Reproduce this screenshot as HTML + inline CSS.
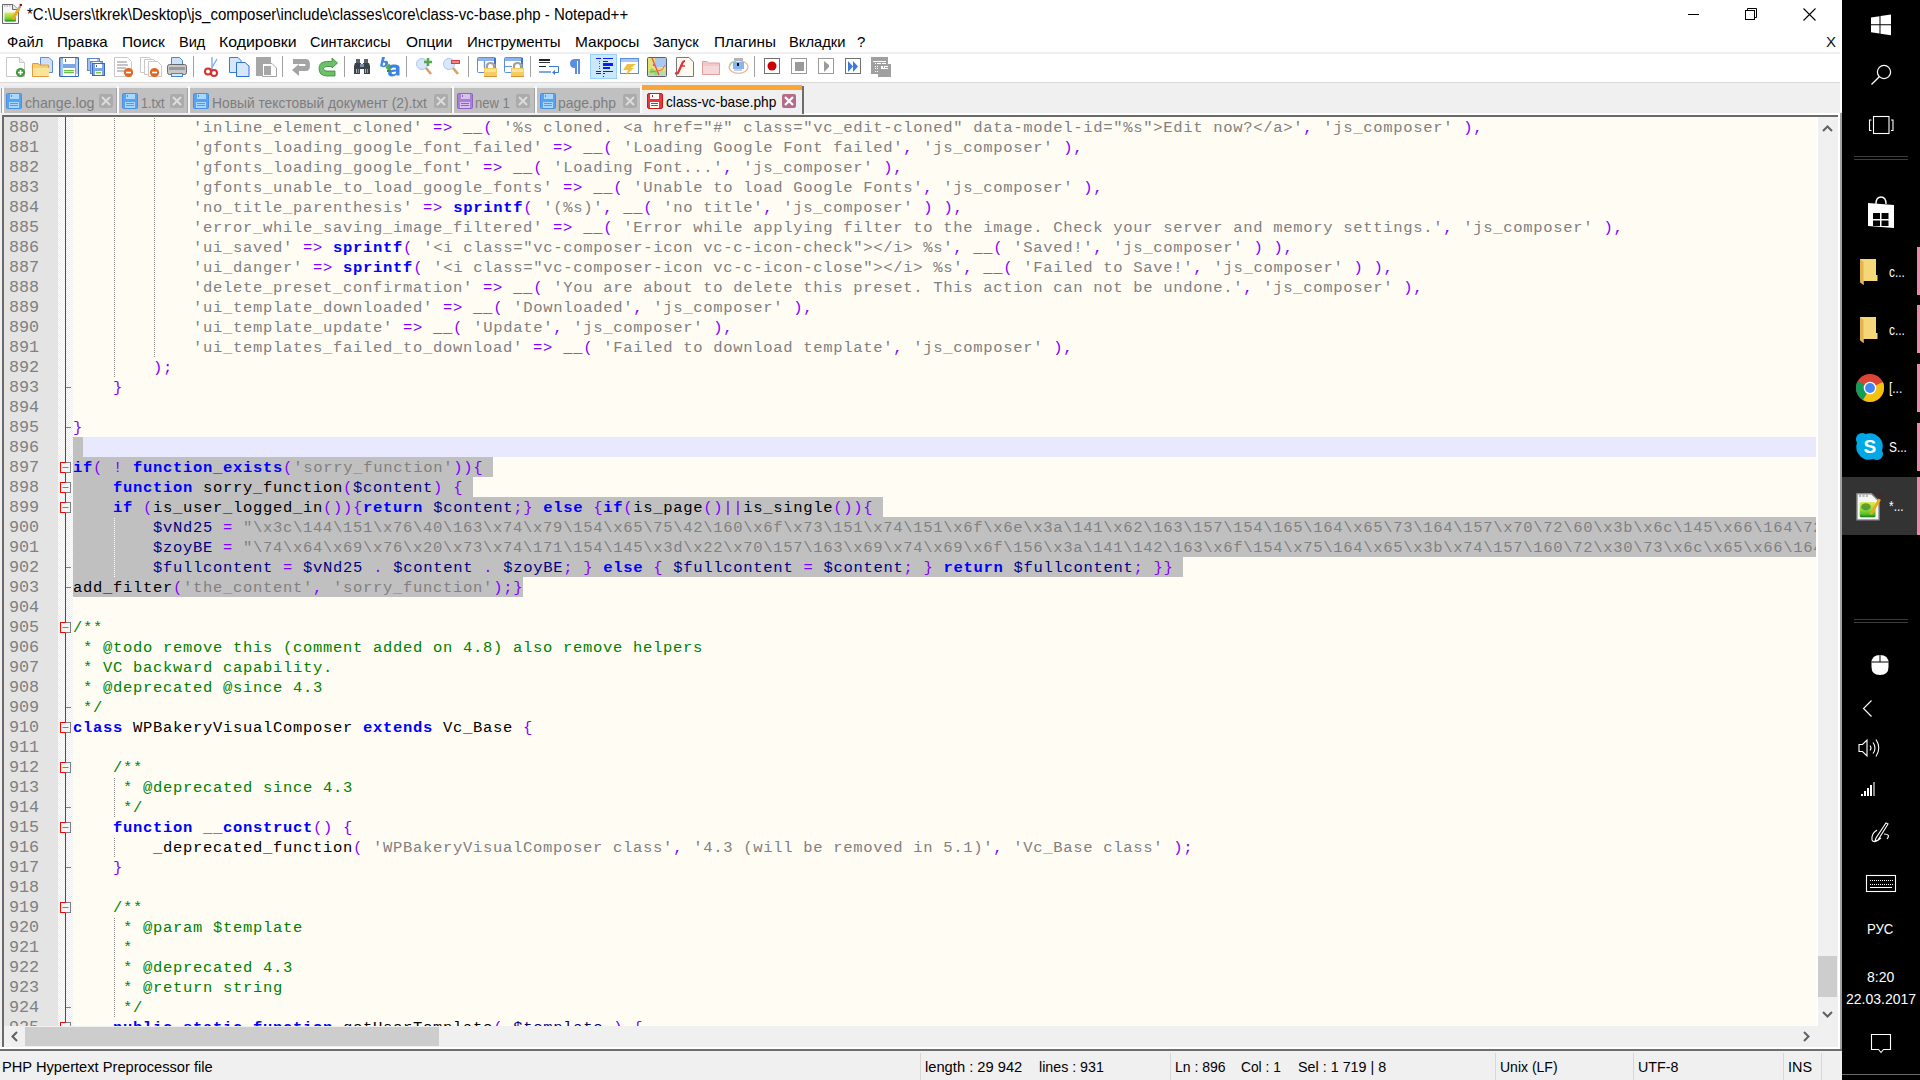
<!DOCTYPE html>
<html><head><meta charset="utf-8">
<style>
*{margin:0;padding:0;box-sizing:border-box}
html,body{width:1920px;height:1080px;overflow:hidden;background:#fff;font-family:"Liberation Sans",sans-serif;position:relative}
.a{position:absolute}
svg{position:absolute;overflow:visible}
.ui{font-family:"Liberation Sans",sans-serif;font-size:15px;color:#000;white-space:pre;line-height:18px}
#title{left:27px;top:6px;font-size:15.6px;transform:scaleX(0.962);transform-origin:0 0}
.menu{top:33px}
#tbsep1{left:0;top:52px;width:1842px;height:2px;background:#f0f0f0}
#tbsep2{left:0;top:82px;width:1842px;height:1px;background:#dadada}
#tabbar{left:0;top:83px;width:1842px;height:32px;background:#f0f0f0}
#edframe{left:0;top:113px;width:1842px;height:937px;background:#f0f0f0}
#edtop{left:0;top:113px;width:1840px;height:2px;background:#fff}
#edtop2{left:2px;top:115px;width:1836px;height:2px;background:#6a6a6a}
#edleft{left:2px;top:115px;width:2px;height:932px;background:#6a6a6a}
#editor{left:4px;top:117px;width:1812px;height:909px;overflow:hidden;background:#fffcf4}
#lnm{left:4px;top:117px;width:54px;height:909px;background:#e4e4e4}
#fold{left:58px;top:117px;width:15px;height:909px;background-color:#ececec;
 background-image:linear-gradient(45deg,#fff 25%,transparent 25%,transparent 75%,#fff 75%),linear-gradient(45deg,#fff 25%,transparent 25%,transparent 75%,#fff 75%);
 background-size:2px 2px;background-position:0 0,1px 1px}
#codeclip{left:0;top:117px;width:1816px;height:909px;overflow:hidden}
.ln{position:absolute;left:0;width:39px;text-align:right;font-family:"Liberation Mono",monospace;font-size:16.8px;letter-spacing:-0.08px;line-height:20px;padding-top:1px;color:#808080;height:20px}
.cl{position:absolute;left:73px;font-family:"Liberation Mono",monospace;font-size:15.5px;letter-spacing:0.7px;line-height:20px;height:20px;padding-top:1px;white-space:pre;color:#000}
.cl b{font-weight:bold;color:#0000ff}
.cl i{font-style:normal}
.cl i.s{color:#808080}
.cl i.o{color:#8000ff}
.cl i.v{color:#000080}
.cl i.c{color:#008000}
.sel{position:absolute;height:20px;background:#c0c0c0}
.cur{position:absolute;left:73px;width:1743px;height:20px;background:#e8e8ff}
.redl{position:absolute;left:65px;width:1px;background:#ff0000}
.tick{position:absolute;left:66px;width:5px;height:1px;background:#808080}
.fbox{position:absolute;left:60px;width:11px;height:11px;background:#f4f4f4;border:1px solid #808080}
.fbox:before{content:"";position:absolute;left:-1px;top:-1px;width:6px;height:11px;border:1px solid #f00;border-right:none}
.fbox:after{content:"";position:absolute;left:1px;top:4px;width:7px;height:1px;background:#808080}
.guide{position:absolute;width:1px;height:20px;background-image:linear-gradient(transparent 50%,#8c8c8c 50%);background-size:1px 2px}
.guide.w{background-image:linear-gradient(transparent 50%,#fff 50%)}
#vscroll{left:1816px;top:117px;width:2px;height:909px;background:#fff}
#vscroll2{left:1818px;top:117px;width:20px;height:930px;background:#f0f0f0}
#vthumb{left:1818px;top:956px;width:19px;height:41px;background:#cdcdcd}
#hscroll{left:4px;top:1026px;width:1814px;height:21px;background:#f0f0f0}
#hthumb{left:25px;top:1027px;width:414px;height:19px;background:#cdcdcd}
#frameR{left:1838px;top:113px;width:2px;height:937px;background:#fff}
#frameR2{left:1840px;top:113px;width:2px;height:967px;background:#a0a0a0}
#hbot{left:0;top:1047px;width:1840px;height:2px;background:#fff}
#status{left:0;top:1049px;width:1842px;height:31px;background:#f0f0f0;border-top:2px solid #6e6e6e}
.ssep{position:absolute;top:1053px;width:1px;height:27px;background:#d7d7d7}
.st{top:1058px}
#taskbar{left:1842px;top:0;width:78px;height:1080px;background:#000}
.tbt{position:absolute;font-family:"Liberation Sans",sans-serif;color:#fff;font-size:14px;white-space:pre;line-height:16px}
.tab{position:absolute;top:88px;height:25px;background:#c0c0c0}
.tabt{position:absolute;top:93px;font-family:"Liberation Sans",sans-serif;font-size:14.2px;line-height:18px;color:#7d7d7d;white-space:pre}
.tabsep{position:absolute;top:86px;width:2px;height:27px;background:#fafafa}
.xb{position:absolute;top:94px;width:14px;height:14px;background:#ababab;border-radius:2px}
.pink{position:absolute;left:1917px;width:3px;background:#f287ad}
</style></head><body>
<div class="a ui" id="title">*C:\Users\tkrek\Desktop\js_composer\include\classes\core\class-vc-base.php - Notepad++</div><div class="a ui menu" style="left:7.0px;transform:scaleX(0.983);transform-origin:0 0">Файл</div><div class="a ui menu" style="left:57.0px;transform:scaleX(1.000);transform-origin:0 0">Правка</div><div class="a ui menu" style="left:122.0px;transform:scaleX(1.030);transform-origin:0 0">Поиск</div><div class="a ui menu" style="left:179.0px;transform:scaleX(0.970);transform-origin:0 0">Вид</div><div class="a ui menu" style="left:219.0px;transform:scaleX(1.057);transform-origin:0 0">Кодировки</div><div class="a ui menu" style="left:310.0px;transform:scaleX(0.966);transform-origin:0 0">Синтаксисы</div><div class="a ui menu" style="left:406.0px;transform:scaleX(1.030);transform-origin:0 0">Опции</div><div class="a ui menu" style="left:467.0px;transform:scaleX(1.000);transform-origin:0 0">Инструменты</div><div class="a ui menu" style="left:575.0px;transform:scaleX(1.030);transform-origin:0 0">Макросы</div><div class="a ui menu" style="left:653.0px;transform:scaleX(0.975);transform-origin:0 0">Запуск</div><div class="a ui menu" style="left:713.5px;transform:scaleX(1.020);transform-origin:0 0">Плагины</div><div class="a ui menu" style="left:789.0px;transform:scaleX(0.980);transform-origin:0 0">Вкладки</div><div class="a ui menu" style="left:857.0px;transform:scaleX(1.000);transform-origin:0 0">?</div><div class="a ui menu" style="left:1826px;color:#111">X</div><svg class="a" style="left:0;top:0" width="1" height="1"><path d="M1688 14.5H1699" stroke="#000" stroke-width="1"/><rect x="1745.5" y="10.5" width="9" height="9" fill="none" stroke="#000"/><path d="M1747.5 10.5V8.5H1756.5V17.5H1754.5" fill="none" stroke="#000"/><path d="M1803.5 8.5L1815.5 20.5M1815.5 8.5L1803.5 20.5" stroke="#000" stroke-width="1.1"/><defs><linearGradient id="npg" x1="0" y1="0" x2="0" y2="1"><stop offset="0" stop-color="#e0ea60"/><stop offset="0.55" stop-color="#8ed838"/><stop offset="0.85" stop-color="#48b828"/><stop offset="1" stop-color="#1a6e12"/></linearGradient></defs><path d="M2.5 4.5H13L18.5 10V23.5H2.5Z" fill="#f4f6f8" stroke="#686868"/><path d="M12.5 4.5V9.5H18" fill="#e8e8e8" stroke="#686868"/><path d="M4 6H11" stroke="#b8b8b8" stroke-width="1.6" stroke-dasharray="1.5 1"/><rect x="4.5" y="12.5" width="11.5" height="9" rx="1" fill="url(#npg)"/><path d="M12.5 19.5L19 8.5" stroke="#f0a818" stroke-width="3"/><path d="M19 8.5L20 6.5" stroke="#9098a8" stroke-width="2.4"/><circle cx="20.8" cy="5.1" r="1.3" fill="#8a0a0a"/></svg><div class="a" id="tbsep1"></div><div class="a" id="tbsep2"></div><svg class="a" style="left:0;top:0" width="1" height="1"><path d="M6.5 57.5H19.5L24.5 62.5V76.5H6.5Z" fill="#fff" stroke="#c9c9c9"/><path d="M19.5 57.5V62.5H24.5" fill="#eee" stroke="#c9c9c9"/><circle cx="20.5" cy="72.5" r="4.6" fill="#3f9b3a"/><path d="M18 72.5H23M20.5 70V75" stroke="#fff" stroke-width="1.6"/><path d="M40.5 57.5H49L52.5 61V72.5H40.5Z" fill="#cfe1fa" stroke="#5a8fdc"/><path d="M32.5 63.5H38L40 65H48.5V76.5H32.5Z" fill="#f6cf6a" stroke="#e79a3b"/><path d="M33 68H49V76H33Z" fill="#fae49a"/><rect x="59.5" y="57.5" width="19" height="19" rx="0.5" fill="#7ea6e4" stroke="#3a66c0"/><rect x="61" y="59" width="2" height="17" fill="#a8c8f4"/><rect x="76" y="59" width="2" height="15" fill="#b4cdf0"/><rect x="63" y="58" width="12" height="6" fill="#fff"/><rect x="65" y="59" width="1" height="3" fill="#3a66c0"/><rect x="63" y="68" width="12" height="8" fill="#fff"/><rect x="64" y="70" width="10" height="1.2" fill="#6cc04a"/><rect x="64" y="71.2" width="10" height="0.8" fill="#cfe8c8"/><rect x="64" y="72" width="10" height="1.2" fill="#6cc04a"/><rect x="76" y="74" width="2" height="2" fill="#fff"/><rect x="87.5" y="58.5" width="12" height="12" fill="#a6c2ec" stroke="#5a86d0"/><rect x="90" y="59" width="7" height="2" fill="#fff"/><rect x="90.5" y="61.5" width="12" height="12" fill="#a6c2ec" stroke="#5a86d0"/><rect x="93" y="62" width="7" height="2" fill="#fff"/><rect x="92.5" y="63.5" width="12" height="12" fill="#7ea6e4" stroke="#3a66c0"/><rect x="95" y="64" width="7" height="4" fill="#fff"/><rect x="96" y="65" width="1" height="2" fill="#3a66c0"/><rect x="95" y="71" width="7" height="4" fill="#fff"/><rect x="96" y="72" width="5" height="1.5" fill="#7cd040"/><path d="M114.5 57.5H127.5L131.5 61.5V76.5H114.5Z" fill="#fff" stroke="#c9c9c9"/><path d="M117 62H127M117 65H128M117 68H126M117 71H125" stroke="#8a8a8a" stroke-width="1"/><circle cx="128.5" cy="72.5" r="4.6" fill="#e5661e"/><path d="M126 72.5H131" stroke="#fff" stroke-width="1.6"/><path d="M140.5 57.5H149.5L153.5 61.5V72.5H140.5Z" fill="#fff" stroke="#c9c9c9"/><path d="M144.5 59.5H153.5L157.5 63.5V74.5H144.5Z" fill="#fff" stroke="#c9c9c9"/><path d="M148.5 61.5H157.5L161.5 65.5V76.5H148.5Z" fill="#fff" stroke="#c9c9c9"/><circle cx="154.5" cy="72.5" r="4.6" fill="#e5661e"/><path d="M152 72.5H157" stroke="#fff" stroke-width="1.6"/><path d="M171.5 57.5H179.5L182.5 60.5V67.5H171.5Z" fill="#cfe1fa" stroke="#4a86d8"/><rect x="167.5" y="64.5" width="19" height="10" rx="2" fill="#c8c8c8" stroke="#6a6a6a"/><rect x="169" y="67" width="16" height="3" fill="#9a9a9a"/><rect x="171.5" y="73.5" width="11" height="3" fill="#d6eafc" stroke="#4a86d8"/><rect x="193" y="56" width="1" height="21" fill="#a0a0a0"/><rect x="282" y="56" width="1" height="21" fill="#a0a0a0"/><rect x="344" y="56" width="1" height="21" fill="#a0a0a0"/><rect x="406" y="56" width="1" height="21" fill="#a0a0a0"/><rect x="468" y="56" width="1" height="21" fill="#a0a0a0"/><rect x="530" y="56" width="1" height="21" fill="#a0a0a0"/><rect x="754" y="56" width="1" height="21" fill="#a0a0a0"/><path d="M212 57V71M217 59L210 71" stroke="#7fb0e8" stroke-width="1.4" fill="none"/><circle cx="208" cy="71.5" r="3" fill="none" stroke="#d43030" stroke-width="2"/><circle cx="214" cy="73" r="3" fill="none" stroke="#d43030" stroke-width="2"/><path d="M229.5 57.5H238L241 60.5V72.5H229.5Z" fill="#d6e6fb" stroke="#3d7ad6"/><path d="M236.5 62.5H245L249 66V76.5H236.5Z" fill="#d6e6fb" stroke="#2f6fd6"/><rect x="256" y="57" width="15" height="19" fill="#a6a6a6"/><path d="M262.5 63.5H272L276.5 68V76.5H262.5Z" fill="#fff" stroke="#a6a6a6"/><rect x="264" y="66" width="7" height="9" fill="#a6a6a6"/><path d="M293 59H306Q310 59 310 65Q310 71 306 71H299V76L292 70L299 64V66H305Q305.5 66 305.5 65Q305.5 64 305 64H293Z" fill="#a4a4a4"/><path d="M332 58L337.5 63L332 68V66.5H327Q323.5 66.5 323.5 68.5Q323.5 71 327 71H335V76H327Q319 76 319 68.5Q319 61.5 327 61.5H332Z" fill="#6cc068" stroke="#2e8a2e" stroke-width="0.8"/><rect x="356" y="59" width="4" height="5" fill="#59636e"/><rect x="364" y="59" width="4" height="5" fill="#59636e"/><path d="M355 63H361V64H363V63H369L370 66V74H364V69H360V74H354V66Z" fill="#3a434c"/><rect x="360" y="64" width="4" height="3" fill="#7f8fa0"/><rect x="356" y="69" width="1" height="4" fill="#b0b8c0"/><rect x="358" y="69" width="1" height="4" fill="#8a949e"/><rect x="365" y="69" width="1" height="4" fill="#b0b8c0"/><rect x="367" y="69" width="1" height="4" fill="#8a949e"/><path d="M382 57H385L384 61Q387 60 388 62Q388.5 66 385 67Q383 67.5 381 66.5L380 66.5ZM383.3 62.5L382.6 65.6Q385 66 385.3 63.8Q385 62.2 383.3 62.5Z" fill="#3f86e6"/><path d="M389 63.5L392.5 67.5L389 71.5L385.5 67.5Z" fill="#4fae45"/><rect x="387" y="70" width="4" height="2" fill="#3a8a30"/><path d="M393 64.5Q399 64 399.5 67V75.5H396.5V74.5Q395 76.5 392 76.5Q388 76.2 388 73Q388.5 69.5 396 69.5V68.5Q396 67.5 393.5 67.5L390 68.5L390 65.3Q391.5 64.6 393 64.5ZM396 71.5Q391.5 71.5 391.5 73Q391.8 74.2 393.5 74.2Q396 74 396 72.5Z" fill="#3a82e4"/><circle cx="422" cy="64" r="5.5" fill="#d8e8fa" stroke="#a8c8ee"/><path d="M426 68L431 74" stroke="#d6a26a" stroke-width="2.6"/><path d="M428 58V66M424 62H432" stroke="#57a84d" stroke-width="2.6"/><circle cx="449" cy="64" r="5.5" fill="#d8e8fa" stroke="#a8c8ee"/><path d="M453 68L458 74" stroke="#d6a26a" stroke-width="2.6"/><rect x="451" y="60" width="9" height="4" fill="#e03a3a"/><rect x="452" y="61" width="7" height="2" fill="#f08a8a"/><rect x="477.5" y="57.5" width="18" height="15" rx="1" fill="#fff" stroke="#5a8fdc"/><rect x="478" y="58" width="17" height="3" fill="#8cb4ec"/><rect x="494" y="58" width="2" height="6" fill="#3f72c8"/><path d="M484.5 61V68" stroke="#6a9ae0" stroke-width="1.4"/><path d="M487 68.5V66Q487 63 490.5 63Q494 63 494 66V68.5" fill="none" stroke="#a0a0a0" stroke-width="2.2"/><rect x="484" y="68" width="13" height="9" fill="#f4cc62"/><rect x="485" y="69" width="11" height="3" fill="#fae49a"/><rect x="484" y="76" width="13" height="1" fill="#e09030"/><rect x="504.5" y="57.5" width="18" height="15" rx="1" fill="#fff" stroke="#5a8fdc"/><rect x="505" y="58" width="17" height="3" fill="#8cb4ec"/><rect x="521" y="58" width="2" height="6" fill="#3f72c8"/><path d="M505 66.5H512" stroke="#6a9ae0" stroke-width="1.2"/><path d="M514 68.5V66Q514 63 517.5 63Q521 63 521 66V68.5" fill="none" stroke="#a0a0a0" stroke-width="2.2"/><rect x="511" y="68" width="13" height="9" fill="#f4cc62"/><rect x="512" y="69" width="11" height="3" fill="#fae49a"/><rect x="511" y="76" width="13" height="1" fill="#e09030"/><rect x="539" y="59" width="11" height="2" fill="#222"/><rect x="539" y="62" width="11" height="1" fill="#333"/><rect x="539" y="66" width="7" height="1" fill="#222"/><rect x="539" y="71" width="12" height="2" fill="#7aa9e6"/><path d="M549 66.5H558.5V72.5H553" fill="none" stroke="#3d7ad6"/><path d="M552 72.5L555 70V75Z" fill="#3d7ad6"/><path d="M575 59H580V74H578V61H577V74H575V68Q570 68 570 63.5Q570 59 575 59Z" fill="#5b8ee0"/><rect x="590.5" y="54.5" width="26" height="24" fill="#cce8ff" stroke="#99d1ff"/><rect x="596" y="58" width="5" height="1" fill="#0a1ef0"/><rect x="603" y="58" width="10" height="1" fill="#0a1ef0"/><rect x="603" y="61" width="5" height="1" fill="#0a1ef0"/><rect x="603" y="63" width="10" height="3" fill="#0a1ef0"/><rect x="603" y="67" width="7" height="2" fill="#0a1ef0"/><rect x="599" y="61" width="1" height="1" fill="#e02020"/><rect x="599" y="63" width="1" height="1" fill="#e02020"/><rect x="599" y="66" width="1" height="1" fill="#e02020"/><rect x="599" y="68" width="1" height="1" fill="#e02020"/><rect x="596" y="71" width="5" height="1" fill="#0a1ef0"/><rect x="603" y="71" width="10" height="1" fill="#0a1ef0"/><rect x="596" y="73" width="5" height="1" fill="#0a1ef0"/><rect x="603" y="73" width="2" height="1" fill="#0a1ef0"/><rect x="603" y="76" width="1" height="1" fill="#0a1ef0"/><rect x="620.5" y="58.5" width="18" height="15" fill="#fff" stroke="#5a8fdc"/><rect x="621" y="59" width="17" height="3" fill="#a9c6ee"/><path d="M627 64H636L631 68H634L626 75L628 70H623Z" fill="#f0c040"/><rect x="647.5" y="57.5" width="19" height="19" rx="1" fill="#e2e07a" stroke="#5e5a78"/><rect x="655" y="58" width="11" height="9" fill="#a8c8ee"/><rect x="648" y="71" width="18" height="5" fill="#b8dcb0"/><circle cx="652" cy="71" r="2.5" fill="#90d870"/><circle cx="656" cy="73" r="2.2" fill="#90d870"/><path d="M652 58L659 75" stroke="#e84d5a" stroke-width="1.3"/><path d="M650 72L662 70L665 65" fill="none" stroke="#f07040" stroke-width="1"/><rect x="653" y="64" width="2" height="2" fill="#e8508a"/><path d="M676.5 57.5H689L693.5 62V76.5H676.5Z" fill="#fffaf0" stroke="#7a7a7a"/><path d="M685 61Q683 61 682 64L678 73Q677 74 675 73" fill="none" stroke="#e0303a" stroke-width="2.2"/><path d="M680 66H685" stroke="#e0303a" stroke-width="1.5"/><path d="M702.5 61.5H707L708.5 63H719.5V74.5H702.5Z" fill="#f2c8c8" stroke="#e0a0a0"/><rect x="703" y="66" width="16" height="8" fill="#f6d8d8"/><ellipse cx="738.5" cy="67" rx="9.5" ry="6.3" fill="#fff" stroke="#e8b890" stroke-width="1.3"/><path d="M729.5 67A9 6 0 0 1 736 61" fill="none" stroke="#a8d8a0" stroke-width="1.3"/><rect x="734" y="58" width="9" height="3" fill="#b4b4b4"/><rect x="733" y="62" width="11" height="7" fill="#8ab4ec"/><rect x="734" y="69" width="8" height="2" fill="#b8d4f4"/><rect x="737" y="63" width="2" height="3" fill="#111"/><rect x="764.5" y="58.5" width="15" height="15" fill="#fff" stroke="#707070"/><circle cx="772" cy="66" r="4.5" fill="#cc0000"/><rect x="791.5" y="58.5" width="15" height="15" fill="#fff" stroke="#9a9a9a"/><rect x="795" y="62" width="9" height="9" fill="#9a9a9a"/><rect x="818.5" y="58.5" width="15" height="15" fill="#fff" stroke="#9a9a9a"/><path d="M824 61V72L829 67V65Z" fill="#9a9a9a"/><rect x="845.5" y="58.5" width="15" height="15" fill="#fff" stroke="#707070"/><path d="M848 61V72L853 66.5ZM853 61V72L858 66.5Z" fill="#3d7ad6"/><rect x="871" y="57" width="17" height="17" fill="#a0a0a0"/><rect x="878" y="64" width="13" height="13" fill="#a0a0a0"/><rect x="873" y="61" width="13" height="1" fill="#fff"/><rect x="875" y="63" width="1" height="1" fill="#fff"/><rect x="877" y="63" width="4" height="1" fill="#fff"/><rect x="882" y="63" width="4" height="1" fill="#fff"/><rect x="875" y="66" width="1" height="1" fill="#fff"/><rect x="877" y="66" width="1" height="1" fill="#fff"/><rect x="875" y="68" width="1" height="1" fill="#fff"/><rect x="877" y="68" width="1" height="1" fill="#fff"/><rect x="875" y="71" width="1" height="1" fill="#fff"/><rect x="877" y="71" width="1" height="1" fill="#fff"/><rect x="881" y="66" width="7" height="3" fill="#fff"/><rect x="883" y="66" width="1" height="2" fill="#a0a0a0"/><rect x="885" y="67" width="3" height="1" fill="#a0a0a0"/></svg><div class="a" id="tabbar"></div><div class="a" style="left:2px;top:86px;width:114px;height:2px;background:#e8e8e8"></div><div class="tab" style="left:2px;width:114px"></div><div class="tabt" style="left:25px;top:94px;transform:scaleX(1.000);transform-origin:0 0">change.log</div><div class="xb" style="left:99px"></div><div class="a" style="left:118px;top:86px;width:69px;height:2px;background:#e8e8e8"></div><div class="tab" style="left:118px;width:69px"></div><div class="tabt" style="left:141px;top:94px;transform:scaleX(0.880);transform-origin:0 0">1.txt</div><div class="xb" style="left:170px"></div><div class="a" style="left:189px;top:86px;width:262px;height:2px;background:#e8e8e8"></div><div class="tab" style="left:189px;width:262px"></div><div class="tabt" style="left:212px;top:94px;transform:scaleX(0.973);transform-origin:0 0">Новый текстовый документ (2).txt</div><div class="xb" style="left:434px"></div><div class="a" style="left:453px;top:86px;width:81px;height:2px;background:#e8e8e8"></div><div class="tab" style="left:453px;width:81px"></div><div class="tabt" style="left:475px;top:94px;transform:scaleX(0.917);transform-origin:0 0">new 1</div><div class="xb" style="left:516px"></div><div class="a" style="left:536px;top:86px;width:104px;height:2px;background:#e8e8e8"></div><div class="tab" style="left:536px;width:104px"></div><div class="tabt" style="left:558px;top:94px;transform:scaleX(0.980);transform-origin:0 0">page.php</div><div class="xb" style="left:623px"></div><div class="a" style="left:1px;top:88px;width:1px;height:25px;background:#a0a0a0"></div><div class="a" style="left:2px;top:87px;width:2px;height:26px;background:#fafafa"></div><div class="a" style="left:641px;top:84px;width:161px;height:29px;background:#f0f0f0"></div><div class="a" style="left:642px;top:85px;width:160px;height:5px;background:#f9a53a"></div><div class="a" style="left:802px;top:86px;width:2px;height:28px;background:#6d6d6d"></div><div class="a" style="left:804px;top:113px;width:1036px;height:2px;background:#fff"></div><div class="a" style="left:116px;top:88px;width:1px;height:25px;background:#a4a4a4"></div><div class="tabsep" style="left:117px"></div><div class="a" style="left:187px;top:88px;width:1px;height:25px;background:#a4a4a4"></div><div class="tabsep" style="left:188px"></div><div class="a" style="left:451px;top:88px;width:1px;height:25px;background:#a4a4a4"></div><div class="tabsep" style="left:452px"></div><div class="a" style="left:534px;top:88px;width:1px;height:25px;background:#a4a4a4"></div><div class="tabsep" style="left:535px"></div><div class="tabsep" style="left:640px"></div><div class="tabt" style="left:666px;color:#000;transform:scaleX(0.965);transform-origin:0 0">class-vc-base.php</div><div class="xb" style="left:782px;background:#b36d87"></div><svg class="a" style="left:0;top:0" width="1" height="1"><rect x="6.5" y="93.5" width="15" height="15" rx="1" fill="#5aa2f0" stroke="#4a90e2"/><rect x="10" y="94" width="9" height="5" fill="#a8d8ff"/><rect x="11" y="95" width="1" height="2" fill="#4a90e2"/><rect x="9" y="102" width="10" height="6" fill="#a8d8ff"/><rect x="10" y="103" width="8" height="1" fill="#5aa89a"/><rect x="10" y="105" width="8" height="1" fill="#5aa89a"/><rect x="122.5" y="93.5" width="15" height="15" rx="1" fill="#5aa2f0" stroke="#4a90e2"/><rect x="126" y="94" width="9" height="5" fill="#a8d8ff"/><rect x="127" y="95" width="1" height="2" fill="#4a90e2"/><rect x="125" y="102" width="10" height="6" fill="#a8d8ff"/><rect x="126" y="103" width="8" height="1" fill="#5aa89a"/><rect x="126" y="105" width="8" height="1" fill="#5aa89a"/><rect x="193.5" y="93.5" width="15" height="15" rx="1" fill="#5aa2f0" stroke="#4a90e2"/><rect x="197" y="94" width="9" height="5" fill="#a8d8ff"/><rect x="198" y="95" width="1" height="2" fill="#4a90e2"/><rect x="196" y="102" width="10" height="6" fill="#a8d8ff"/><rect x="197" y="103" width="8" height="1" fill="#5aa89a"/><rect x="197" y="105" width="8" height="1" fill="#5aa89a"/><rect x="457.5" y="93.5" width="15" height="15" rx="1" fill="#a780d0" stroke="#8f62c0"/><rect x="461" y="94" width="9" height="5" fill="#d8c0f0"/><rect x="462" y="95" width="1" height="2" fill="#8f62c0"/><rect x="460" y="102" width="10" height="6" fill="#d8c0f0"/><rect x="461" y="103" width="8" height="1" fill="#8f62c0"/><rect x="461" y="105" width="8" height="1" fill="#8f62c0"/><rect x="540.5" y="93.5" width="15" height="15" rx="1" fill="#5aa2f0" stroke="#4a90e2"/><rect x="544" y="94" width="9" height="5" fill="#a8d8ff"/><rect x="545" y="95" width="1" height="2" fill="#4a90e2"/><rect x="543" y="102" width="10" height="6" fill="#a8d8ff"/><rect x="544" y="103" width="8" height="1" fill="#5aa89a"/><rect x="544" y="105" width="8" height="1" fill="#5aa89a"/><rect x="647.5" y="93.5" width="15" height="15" rx="1.5" fill="#e8383a" stroke="#d01818"/><rect x="650" y="94" width="9" height="5" fill="#fff"/><rect x="652" y="95" width="1" height="2" fill="#d01818"/><rect x="650" y="102" width="9" height="6" fill="#fff"/><rect x="651" y="103" width="7" height="1" fill="#e02a2a"/><rect x="651" y="105" width="7" height="1" fill="#e02a2a"/><path d="M102 97L110 105M110 97L102 105" stroke="#dcdcdc" stroke-width="2"/><path d="M173 97L181 105M181 97L173 105" stroke="#dcdcdc" stroke-width="2"/><path d="M437 97L445 105M445 97L437 105" stroke="#dcdcdc" stroke-width="2"/><path d="M519 97L527 105M527 97L519 105" stroke="#dcdcdc" stroke-width="2"/><path d="M626 97L634 105M634 97L626 105" stroke="#dcdcdc" stroke-width="2"/><path d="M785 97L793 105M793 97L785 105" stroke="#fff" stroke-width="2.2"/></svg><div class="a" id="edframe" style="top:115px;height:935px"></div><div class="a" id="edtop2"></div><div class="a" id="edleft"></div>
<div class="a" id="editor"></div>
<div class="a" id="lnm"></div>
<div class="a" id="fold"></div>
<div class="a" id="codeclip">
<div class="cur" style="top:320px"></div>
<div class="sel" style="top:320px;left:73px;width:10px"></div>
<div class="sel" style="top:340px;left:73px;width:420px"></div>
<div class="sel" style="top:360px;left:73px;width:400px"></div>
<div class="sel" style="top:380px;left:73px;width:810px"></div>
<div class="sel" style="top:400px;left:73px;width:2080px"></div>
<div class="sel" style="top:420px;left:73px;width:2130px"></div>
<div class="sel" style="top:440px;left:73px;width:1110px"></div>
<div class="sel" style="top:460px;left:73px;width:450px"></div>
<svg style="left:0;top:0" width="80" height="909"><path d="M65.5 0V909" stroke="#f00"/><path d="M66 270.5H71" stroke="#808080"/><path d="M66 310.5H71" stroke="#808080"/><path d="M66 450.5H71" stroke="#808080"/><path d="M66 470.5H71" stroke="#808080"/><path d="M66 590.5H71" stroke="#808080"/><path d="M66 690.5H71" stroke="#808080"/><path d="M66 750.5H71" stroke="#808080"/><path d="M66 890.5H71" stroke="#808080"/><rect x="60.5" y="345.5" width="10" height="10" fill="#f4f4f4" stroke="#808080"/><path d="M65.5 345.5H60.5V355.5H65.5" fill="none" stroke="#f00"/><path d="M62.5 350.5H68.5" stroke="#808080"/><rect x="60.5" y="365.5" width="10" height="10" fill="#f4f4f4" stroke="#808080"/><path d="M65.5 365.5H60.5V375.5H65.5" fill="none" stroke="#f00"/><path d="M62.5 370.5H68.5" stroke="#808080"/><rect x="60.5" y="385.5" width="10" height="10" fill="#f4f4f4" stroke="#808080"/><path d="M65.5 385.5H60.5V395.5H65.5" fill="none" stroke="#f00"/><path d="M62.5 390.5H68.5" stroke="#808080"/><rect x="60.5" y="505.5" width="10" height="10" fill="#f4f4f4" stroke="#808080"/><path d="M65.5 505.5H60.5V515.5H65.5" fill="none" stroke="#f00"/><path d="M62.5 510.5H68.5" stroke="#808080"/><rect x="60.5" y="605.5" width="10" height="10" fill="#f4f4f4" stroke="#808080"/><path d="M65.5 605.5H60.5V615.5H65.5" fill="none" stroke="#f00"/><path d="M62.5 610.5H68.5" stroke="#808080"/><rect x="60.5" y="645.5" width="10" height="10" fill="#f4f4f4" stroke="#808080"/><path d="M65.5 645.5H60.5V655.5H65.5" fill="none" stroke="#f00"/><path d="M62.5 650.5H68.5" stroke="#808080"/><rect x="60.5" y="705.5" width="10" height="10" fill="#f4f4f4" stroke="#808080"/><path d="M65.5 705.5H60.5V715.5H65.5" fill="none" stroke="#f00"/><path d="M62.5 710.5H68.5" stroke="#808080"/><rect x="60.5" y="785.5" width="10" height="10" fill="#f4f4f4" stroke="#808080"/><path d="M65.5 785.5H60.5V795.5H65.5" fill="none" stroke="#f00"/><path d="M62.5 790.5H68.5" stroke="#808080"/><rect x="60.5" y="905.5" width="10" height="10" fill="#f4f4f4" stroke="#808080"/><path d="M65.5 905.5H60.5V915.5H65.5" fill="none" stroke="#f00"/><path d="M62.5 910.5H68.5" stroke="#808080"/></svg>
<div class="guide" style="left:114px;top:0px"></div>
<div class="guide" style="left:154px;top:0px"></div>
<div class="guide" style="left:114px;top:20px"></div>
<div class="guide" style="left:154px;top:20px"></div>
<div class="guide" style="left:114px;top:40px"></div>
<div class="guide" style="left:154px;top:40px"></div>
<div class="guide" style="left:114px;top:60px"></div>
<div class="guide" style="left:154px;top:60px"></div>
<div class="guide" style="left:114px;top:80px"></div>
<div class="guide" style="left:154px;top:80px"></div>
<div class="guide" style="left:114px;top:100px"></div>
<div class="guide" style="left:154px;top:100px"></div>
<div class="guide" style="left:114px;top:120px"></div>
<div class="guide" style="left:154px;top:120px"></div>
<div class="guide" style="left:114px;top:140px"></div>
<div class="guide" style="left:154px;top:140px"></div>
<div class="guide" style="left:114px;top:160px"></div>
<div class="guide" style="left:154px;top:160px"></div>
<div class="guide" style="left:114px;top:180px"></div>
<div class="guide" style="left:154px;top:180px"></div>
<div class="guide" style="left:114px;top:200px"></div>
<div class="guide" style="left:154px;top:200px"></div>
<div class="guide" style="left:114px;top:220px"></div>
<div class="guide" style="left:154px;top:220px"></div>
<div class="guide" style="left:114px;top:240px"></div>
<div class="guide w" style="left:114px;top:400px"></div>
<div class="guide w" style="left:114px;top:420px"></div>
<div class="guide w" style="left:114px;top:440px"></div>
<div class="guide" style="left:114px;top:660px"></div>
<div class="guide" style="left:114px;top:680px"></div>
<div class="guide" style="left:114px;top:720px"></div>
<div class="guide" style="left:114px;top:800px"></div>
<div class="guide" style="left:114px;top:820px"></div>
<div class="guide" style="left:114px;top:840px"></div>
<div class="guide" style="left:114px;top:860px"></div>
<div class="guide" style="left:114px;top:880px"></div>
<div class="ln" style="top:0px">880</div>
<div class="ln" style="top:20px">881</div>
<div class="ln" style="top:40px">882</div>
<div class="ln" style="top:60px">883</div>
<div class="ln" style="top:80px">884</div>
<div class="ln" style="top:100px">885</div>
<div class="ln" style="top:120px">886</div>
<div class="ln" style="top:140px">887</div>
<div class="ln" style="top:160px">888</div>
<div class="ln" style="top:180px">889</div>
<div class="ln" style="top:200px">890</div>
<div class="ln" style="top:220px">891</div>
<div class="ln" style="top:240px">892</div>
<div class="ln" style="top:260px">893</div>
<div class="ln" style="top:280px">894</div>
<div class="ln" style="top:300px">895</div>
<div class="ln" style="top:320px">896</div>
<div class="ln" style="top:340px">897</div>
<div class="ln" style="top:360px">898</div>
<div class="ln" style="top:380px">899</div>
<div class="ln" style="top:400px">900</div>
<div class="ln" style="top:420px">901</div>
<div class="ln" style="top:440px">902</div>
<div class="ln" style="top:460px">903</div>
<div class="ln" style="top:480px">904</div>
<div class="ln" style="top:500px">905</div>
<div class="ln" style="top:520px">906</div>
<div class="ln" style="top:540px">907</div>
<div class="ln" style="top:560px">908</div>
<div class="ln" style="top:580px">909</div>
<div class="ln" style="top:600px">910</div>
<div class="ln" style="top:620px">911</div>
<div class="ln" style="top:640px">912</div>
<div class="ln" style="top:660px">913</div>
<div class="ln" style="top:680px">914</div>
<div class="ln" style="top:700px">915</div>
<div class="ln" style="top:720px">916</div>
<div class="ln" style="top:740px">917</div>
<div class="ln" style="top:760px">918</div>
<div class="ln" style="top:780px">919</div>
<div class="ln" style="top:800px">920</div>
<div class="ln" style="top:820px">921</div>
<div class="ln" style="top:840px">922</div>
<div class="ln" style="top:860px">923</div>
<div class="ln" style="top:880px">924</div>
<div class="ln" style="top:900px">925</div>
<div class="cl" style="top:0px">            <i class="s">&#x27;inline_element_cloned&#x27;</i> <i class="o">=&gt;</i> __<i class="o">(</i> <i class="s">&#x27;%s cloned. &lt;a href=&quot;#&quot; class=&quot;vc_edit-cloned&quot; data-model-id=&quot;%s&quot;&gt;Edit now?&lt;/a&gt;&#x27;</i><i class="o">,</i> <i class="s">&#x27;js_composer&#x27;</i> <i class="o">),</i></div>
<div class="cl" style="top:20px">            <i class="s">&#x27;gfonts_loading_google_font_failed&#x27;</i> <i class="o">=&gt;</i> __<i class="o">(</i> <i class="s">&#x27;Loading Google Font failed&#x27;</i><i class="o">,</i> <i class="s">&#x27;js_composer&#x27;</i> <i class="o">),</i></div>
<div class="cl" style="top:40px">            <i class="s">&#x27;gfonts_loading_google_font&#x27;</i> <i class="o">=&gt;</i> __<i class="o">(</i> <i class="s">&#x27;Loading Font...&#x27;</i><i class="o">,</i> <i class="s">&#x27;js_composer&#x27;</i> <i class="o">),</i></div>
<div class="cl" style="top:60px">            <i class="s">&#x27;gfonts_unable_to_load_google_fonts&#x27;</i> <i class="o">=&gt;</i> __<i class="o">(</i> <i class="s">&#x27;Unable to load Google Fonts&#x27;</i><i class="o">,</i> <i class="s">&#x27;js_composer&#x27;</i> <i class="o">),</i></div>
<div class="cl" style="top:80px">            <i class="s">&#x27;no_title_parenthesis&#x27;</i> <i class="o">=&gt;</i> <b class="k">sprintf</b><i class="o">(</i> <i class="s">&#x27;(%s)&#x27;</i><i class="o">,</i> __<i class="o">(</i> <i class="s">&#x27;no title&#x27;</i><i class="o">,</i> <i class="s">&#x27;js_composer&#x27;</i> <i class="o">)</i> <i class="o">),</i></div>
<div class="cl" style="top:100px">            <i class="s">&#x27;error_while_saving_image_filtered&#x27;</i> <i class="o">=&gt;</i> __<i class="o">(</i> <i class="s">&#x27;Error while applying filter to the image. Check your server and memory settings.&#x27;</i><i class="o">,</i> <i class="s">&#x27;js_composer&#x27;</i> <i class="o">),</i></div>
<div class="cl" style="top:120px">            <i class="s">&#x27;ui_saved&#x27;</i> <i class="o">=&gt;</i> <b class="k">sprintf</b><i class="o">(</i> <i class="s">&#x27;&lt;i class=&quot;vc-composer-icon vc-c-icon-check&quot;&gt;&lt;/i&gt; %s&#x27;</i><i class="o">,</i> __<i class="o">(</i> <i class="s">&#x27;Saved!&#x27;</i><i class="o">,</i> <i class="s">&#x27;js_composer&#x27;</i> <i class="o">)</i> <i class="o">),</i></div>
<div class="cl" style="top:140px">            <i class="s">&#x27;ui_danger&#x27;</i> <i class="o">=&gt;</i> <b class="k">sprintf</b><i class="o">(</i> <i class="s">&#x27;&lt;i class=&quot;vc-composer-icon vc-c-icon-close&quot;&gt;&lt;/i&gt; %s&#x27;</i><i class="o">,</i> __<i class="o">(</i> <i class="s">&#x27;Failed to Save!&#x27;</i><i class="o">,</i> <i class="s">&#x27;js_composer&#x27;</i> <i class="o">)</i> <i class="o">),</i></div>
<div class="cl" style="top:160px">            <i class="s">&#x27;delete_preset_confirmation&#x27;</i> <i class="o">=&gt;</i> __<i class="o">(</i> <i class="s">&#x27;You are about to delete this preset. This action can not be undone.&#x27;</i><i class="o">,</i> <i class="s">&#x27;js_composer&#x27;</i> <i class="o">),</i></div>
<div class="cl" style="top:180px">            <i class="s">&#x27;ui_template_downloaded&#x27;</i> <i class="o">=&gt;</i> __<i class="o">(</i> <i class="s">&#x27;Downloaded&#x27;</i><i class="o">,</i> <i class="s">&#x27;js_composer&#x27;</i> <i class="o">),</i></div>
<div class="cl" style="top:200px">            <i class="s">&#x27;ui_template_update&#x27;</i> <i class="o">=&gt;</i> __<i class="o">(</i> <i class="s">&#x27;Update&#x27;</i><i class="o">,</i> <i class="s">&#x27;js_composer&#x27;</i> <i class="o">),</i></div>
<div class="cl" style="top:220px">            <i class="s">&#x27;ui_templates_failed_to_download&#x27;</i> <i class="o">=&gt;</i> __<i class="o">(</i> <i class="s">&#x27;Failed to download template&#x27;</i><i class="o">,</i> <i class="s">&#x27;js_composer&#x27;</i> <i class="o">),</i></div>
<div class="cl" style="top:240px">        <i class="o">);</i></div>
<div class="cl" style="top:260px">    <i class="o">}</i></div>
<div class="cl" style="top:280px"></div>
<div class="cl" style="top:300px"><i class="o">}</i></div>
<div class="cl" style="top:320px"></div>
<div class="cl sl" style="top:340px"><b class="k">if</b><i class="o">(</i> <i class="o">!</i> <b class="k">function_exists</b><i class="o">(</i><i class="s">&#x27;sorry_function&#x27;</i><i class="o">))</i><i class="o">{</i></div>
<div class="cl sl" style="top:360px">    <b class="k">function</b> sorry_function<i class="o">(</i><i class="v">$content</i><i class="o">)</i> <i class="o">{</i></div>
<div class="cl sl" style="top:380px">    <b class="k">if</b> <i class="o">(</i>is_user_logged_in<i class="o">()){</i><b class="k">return</b> <i class="v">$content</i><i class="o">;}</i> <b class="k">else</b> <i class="o">{</i><b class="k">if</b><i class="o">(</i>is_page<i class="o">()||</i>is_single<i class="o">()){</i></div>
<div class="cl sl" style="top:400px">        <i class="v">$vNd25</i> <i class="o">=</i> <i class="s">&quot;\x3c\144\151\x76\40\163\x74\x79\154\x65\75\42\160\x6f\x73\151\x74\151\x6f\x6e\x3a\141\x62\163\157\154\165\164\x65\73\164\157\x70\72\60\x3b\x6c\145\x66\164\72\55\x33\62\x30\x70\170\73\x22\76</i></div>
<div class="cl sl" style="top:420px">        <i class="v">$zoyBE</i> <i class="o">=</i> <i class="s">&quot;\74\x64\x69\x76\x20\x73\x74\171\154\145\x3d\x22\x70\157\163\x69\x74\x69\x6f\156\x3a\141\142\163\x6f\154\x75\164\x65\x3b\x74\157\160\72\x30\73\x6c\x65\x66\164\x3a\x2d\x33\62\x30\x70\170\73\x22\76</i></div>
<div class="cl sl" style="top:440px">        <i class="v">$fullcontent</i> <i class="o">=</i> <i class="v">$vNd25</i> <i class="o">.</i> <i class="v">$content</i> <i class="o">.</i> <i class="v">$zoyBE</i><i class="o">;</i> <i class="o">}</i> <b class="k">else</b> <i class="o">{</i> <i class="v">$fullcontent</i> <i class="o">=</i> <i class="v">$content</i><i class="o">;</i> <i class="o">}</i> <b class="k">return</b> <i class="v">$fullcontent</i><i class="o">;</i> <i class="o">}}</i></div>
<div class="cl sl" style="top:460px">add_filter<i class="o">(</i><i class="s">&#x27;the_content&#x27;</i><i class="o">,</i> <i class="s">&#x27;sorry_function&#x27;</i><i class="o">);}</i></div>
<div class="cl" style="top:480px"></div>
<div class="cl" style="top:500px"><i class="c">/**</i></div>
<div class="cl" style="top:520px"><i class="c"> * @todo remove this (comment added on 4.8) also remove helpers</i></div>
<div class="cl" style="top:540px"><i class="c"> * VC backward capability.</i></div>
<div class="cl" style="top:560px"><i class="c"> * @deprecated @since 4.3</i></div>
<div class="cl" style="top:580px"><i class="c"> */</i></div>
<div class="cl" style="top:600px"><b class="k">class</b> WPBakeryVisualComposer <b class="k">extends</b> Vc_Base <i class="o">{</i></div>
<div class="cl" style="top:620px"></div>
<div class="cl" style="top:640px">    <i class="c">/**</i></div>
<div class="cl" style="top:660px">    <i class="c"> * @deprecated since 4.3</i></div>
<div class="cl" style="top:680px">    <i class="c"> */</i></div>
<div class="cl" style="top:700px">    <b class="k">function</b> <b class="k">__construct</b><i class="o">()</i> <i class="o">{</i></div>
<div class="cl" style="top:720px">        _deprecated_function<i class="o">(</i> <i class="s">&#x27;WPBakeryVisualComposer class&#x27;</i><i class="o">,</i> <i class="s">&#x27;4.3 (will be removed in 5.1)&#x27;</i><i class="o">,</i> <i class="s">&#x27;Vc_Base class&#x27;</i> <i class="o">);</i></div>
<div class="cl" style="top:740px">    <i class="o">}</i></div>
<div class="cl" style="top:760px"></div>
<div class="cl" style="top:780px">    <i class="c">/**</i></div>
<div class="cl" style="top:800px">    <i class="c"> * @param $template</i></div>
<div class="cl" style="top:820px">    <i class="c"> *</i></div>
<div class="cl" style="top:840px">    <i class="c"> * @deprecated 4.3</i></div>
<div class="cl" style="top:860px">    <i class="c"> * @return string</i></div>
<div class="cl" style="top:880px">    <i class="c"> */</i></div>
<div class="cl" style="top:900px">    <b class="k">public</b> <b class="k">static</b> <b class="k">function</b> getUserTemplate<i class="o">(</i> <i class="v">$template</i> <i class="o">)</i> <i class="o">{</i></div>
</div>
<div class="a" id="vscroll"></div><div class="a" id="vscroll2"></div><div class="a" id="vthumb"></div><div class="a" id="hscroll"></div><div class="a" id="hthumb"></div><div class="a" id="frameR"></div><div class="a" id="frameR2"></div><div class="a" id="hbot"></div><svg class="a" style="left:0;top:0" width="1" height="1"><path d="M1823 131L1827.5 126.5L1832 131" fill="none" stroke="#606060" stroke-width="2"/><path d="M1823 1012L1827.5 1016.5L1832 1012" fill="none" stroke="#606060" stroke-width="2"/><path d="M17 1032L12.5 1036.5L17 1041" fill="none" stroke="#606060" stroke-width="2"/><path d="M1804 1032L1808.5 1036.5L1804 1041" fill="none" stroke="#606060" stroke-width="2"/></svg><div class="a" id="status"></div><div class="ssep" style="left:920px"></div><div class="ssep" style="left:1170px"></div><div class="ssep" style="left:1495px"></div><div class="ssep" style="left:1633px"></div><div class="ssep" style="left:1783px"></div><div class="ssep" style="left:1821px"></div><div class="a ui st" style="left:2px;transform:scaleX(0.977);transform-origin:0 0">PHP Hypertext Preprocessor file</div><div class="a ui st" style="left:925px;transform:scaleX(0.980);transform-origin:0 0">length : 29 942</div><div class="a ui st" style="left:1039px;transform:scaleX(0.948);transform-origin:0 0">lines : 931</div><div class="a ui st" style="left:1175px;transform:scaleX(0.934);transform-origin:0 0">Ln : 896</div><div class="a ui st" style="left:1241px;transform:scaleX(0.919);transform-origin:0 0">Col : 1</div><div class="a ui st" style="left:1298px;transform:scaleX(0.956);transform-origin:0 0">Sel : 1 719 | 8</div><div class="a ui st" style="left:1500px;transform:scaleX(0.933);transform-origin:0 0">Unix (LF)</div><div class="a ui st" style="left:1638px;transform:scaleX(0.950);transform-origin:0 0">UTF-8</div><div class="a ui st" style="left:1788px;transform:scaleX(0.960);transform-origin:0 0">INS</div><div class="a" id="taskbar"></div><div class="a" style="left:1842px;top:477px;width:75px;height:58px;background:#333"></div><div class="pink" style="top:247px;height:48px"></div><div class="pink" style="top:305px;height:48px"></div><div class="pink" style="top:364px;height:48px"></div><div class="pink" style="top:423px;height:48px"></div><div class="pink" style="top:477px;height:58px"></div><svg class="a" style="left:0;top:0" width="1" height="1"><path d="M1871 17.5L1879.5 16.2V24.3H1871ZM1880.5 16L1891 14.4V24.3H1880.5ZM1871 25.3H1879.5V33.5L1871 32.3ZM1880.5 25.3H1891V35.2L1880.5 33.7Z" fill="#fff"/><circle cx="1884" cy="72" r="6.6" fill="none" stroke="#fff" stroke-width="1.2"/><path d="M1879.3 76.7L1871.5 84.5" stroke="#fff" stroke-width="1.3"/><rect x="1873.5" y="116.5" width="15.5" height="17" fill="none" stroke="#fff" stroke-width="1.1"/><path d="M1871.5 120H1869.5V130.5H1871.5M1891 120H1893V130.5H1891" fill="none" stroke="#fff" stroke-width="1.1"/><path d="M1854 156.5H1908M1854 159.5H1908M1854 619.5H1908M1854 622.5H1908" stroke="#3c3c3c"/><path d="M1876 204Q1876 197 1881 197Q1886 197 1886 204" fill="none" stroke="#fff" stroke-width="1.4"/><path d="M1868 203L1894 205V228L1868 226Z" fill="#fff"/><path d="M1873 213H1880V219H1873ZM1881.5 213H1888.5V219H1881.5ZM1873 220.5H1880V226H1873ZM1881.5 220.5H1888.5V226H1881.5Z" fill="#000"/><path d="M1860 259H1876V275H1877.5V281H1863.5V285L1860 282Z" fill="#f5d77a"/><path d="M1860 259L1863.5 262V285L1860 282Z" fill="#e2b64c"/><path d="M1860 317H1876V333H1877.5V339H1863.5V343L1860 340Z" fill="#f5d77a"/><path d="M1860 317L1863.5 320V343L1860 340Z" fill="#e2b64c"/><circle cx="1870" cy="388" r="14" fill="#db4437"/><path d="M1870 388L1857.9 381A14 14 0 0 0 1863 400.1Z" fill="#0f9d58"/><path d="M1870 388L1863 400.1A14 14 0 0 0 1884 388Z" fill="#f4c20d"/><path d="M1870 388L1884 388A14 14 0 0 0 1883 382Z" fill="#f4c20d"/><circle cx="1870" cy="388" r="6.3" fill="#fff"/><circle cx="1870" cy="388" r="4.9" fill="#4285f4"/><path d="M1862 433A6 6 0 0 0 1856 439Q1856 441 1857 442.5A13 13 0 0 0 1873.5 459Q1875 460 1877 460A6 6 0 0 0 1883 454Q1883 452 1882 450.5A13 13 0 0 0 1865.5 434Q1864 433 1862 433Z" fill="#00a8e6"/><text x="1863.5" y="453" font-family="Liberation Sans" font-weight="bold" font-size="19" fill="#fff">S</text><g transform="translate(1853.5 487.5) scale(1.38)"><path d="M2.5 4.5H13L18.5 10V23.5H2.5Z" fill="#f4f6f8" stroke="#8a8a8a"/><path d="M4 6H11" stroke="#b8b8b8" stroke-width="1.6" stroke-dasharray="1.5 1"/><rect x="4.5" y="10.5" width="11.5" height="11" rx="1" fill="url(#npg)"/><ellipse cx="9" cy="14" rx="3.5" ry="2.6" fill="#3e8a2a" opacity="0.75"/><path d="M12.5 19.5L19 8.5" stroke="#f0a818" stroke-width="2"/><circle cx="20.3" cy="5.8" r="0.9" fill="#8a0a0a"/></g><path d="M1871.5 663Q1871.5 655 1880 655Q1888.5 655 1888.5 663V667Q1888.5 675 1880 675Q1871.5 675 1871.5 667Z" fill="#fff"/><path d="M1871.5 662H1888.5M1880 655V662" stroke="#000" stroke-width="1"/><path d="M1871.5 700.5L1863.5 708.5L1871.5 716.5" fill="none" stroke="#fff" stroke-width="1.1"/><path d="M1859 744.5H1862.5L1867 740V756L1862.5 751.5H1859Z" fill="none" stroke="#fff" stroke-width="1.1"/><path d="M1870 745.5Q1872 748 1870 750.5M1873 742.5Q1877 748 1873 753.5M1876 739.5Q1881.5 748 1876 756.5" fill="none" stroke="#fff" stroke-width="1.1"/><rect x="1861" y="794" width="2" height="2" fill="#fff"/><rect x="1864" y="791" width="2" height="5" fill="#fff"/><rect x="1867" y="788" width="2" height="8" fill="#fff"/><rect x="1870" y="785" width="2" height="11" fill="#fff"/><rect x="1873" y="782" width="2" height="14" fill="#8a8a8a"/><path d="M1888 824L1878 840L1875 841L1876 838L1886 823Z M1877 830Q1871 834 1872 840Q1874 844 1881 838M1884 834Q1891 834 1887 839" fill="none" stroke="#fff" stroke-width="1.1"/><rect x="1866.5" y="875.5" width="29" height="16" fill="none" stroke="#fff" stroke-width="1.1"/><rect x="1870" y="880" width="1" height="1" fill="#fff"/><rect x="1872" y="880" width="1" height="1" fill="#fff"/><rect x="1874" y="880" width="1" height="1" fill="#fff"/><rect x="1876" y="880" width="1" height="1" fill="#fff"/><rect x="1878" y="880" width="1" height="1" fill="#fff"/><rect x="1880" y="880" width="1" height="1" fill="#fff"/><rect x="1882" y="880" width="1" height="1" fill="#fff"/><rect x="1884" y="880" width="1" height="1" fill="#fff"/><rect x="1886" y="880" width="1" height="1" fill="#fff"/><rect x="1888" y="880" width="1" height="1" fill="#fff"/><rect x="1890" y="880" width="1" height="1" fill="#fff"/><rect x="1892" y="880" width="1" height="1" fill="#fff"/><rect x="1870" y="884" width="1" height="1" fill="#fff"/><rect x="1872" y="884" width="1" height="1" fill="#fff"/><rect x="1874" y="884" width="1" height="1" fill="#fff"/><rect x="1876" y="884" width="1" height="1" fill="#fff"/><rect x="1878" y="884" width="1" height="1" fill="#fff"/><rect x="1880" y="884" width="1" height="1" fill="#fff"/><rect x="1882" y="884" width="1" height="1" fill="#fff"/><rect x="1884" y="884" width="1" height="1" fill="#fff"/><rect x="1886" y="884" width="1" height="1" fill="#fff"/><rect x="1888" y="884" width="1" height="1" fill="#fff"/><rect x="1890" y="884" width="1" height="1" fill="#fff"/><rect x="1892" y="884" width="1" height="1" fill="#fff"/><rect x="1870" y="887" width="22" height="1" fill="#fff"/><path d="M1871.5 1034.5H1890.5V1049.5H1883.5L1881 1052.5L1878.5 1049.5H1871.5Z" fill="none" stroke="#fff" stroke-width="1.1"/></svg><div class="a tbt" style="left:1889px;top:264px;transform:scaleX(0.85);transform-origin:0 0">c...</div><div class="a tbt" style="left:1889px;top:322px;transform:scaleX(0.85);transform-origin:0 0">c...</div><div class="a tbt" style="left:1889px;top:380px;transform:scaleX(0.85);transform-origin:0 0">[...</div><div class="a tbt" style="left:1889px;top:439px;transform:scaleX(0.85);transform-origin:0 0">S...</div><div class="a tbt" style="left:1889px;top:498px;transform:scaleX(0.85);transform-origin:0 0">*...</div><div class="a tbt" style="left:1867px;top:921px;transform:scaleX(0.94);transform-origin:0 0">РУС</div><div class="a tbt" style="left:1867px;top:969px">8:20</div><div class="a tbt" style="left:1846px;top:991px">22.03.2017</div><div class="a" style="left:1840px;top:0;width:2px;height:112px;background:#fff"></div><div class="a" style="left:1842px;top:1074px;width:78px;height:1px;background:#6a6a6a"></div>
</body></html>
